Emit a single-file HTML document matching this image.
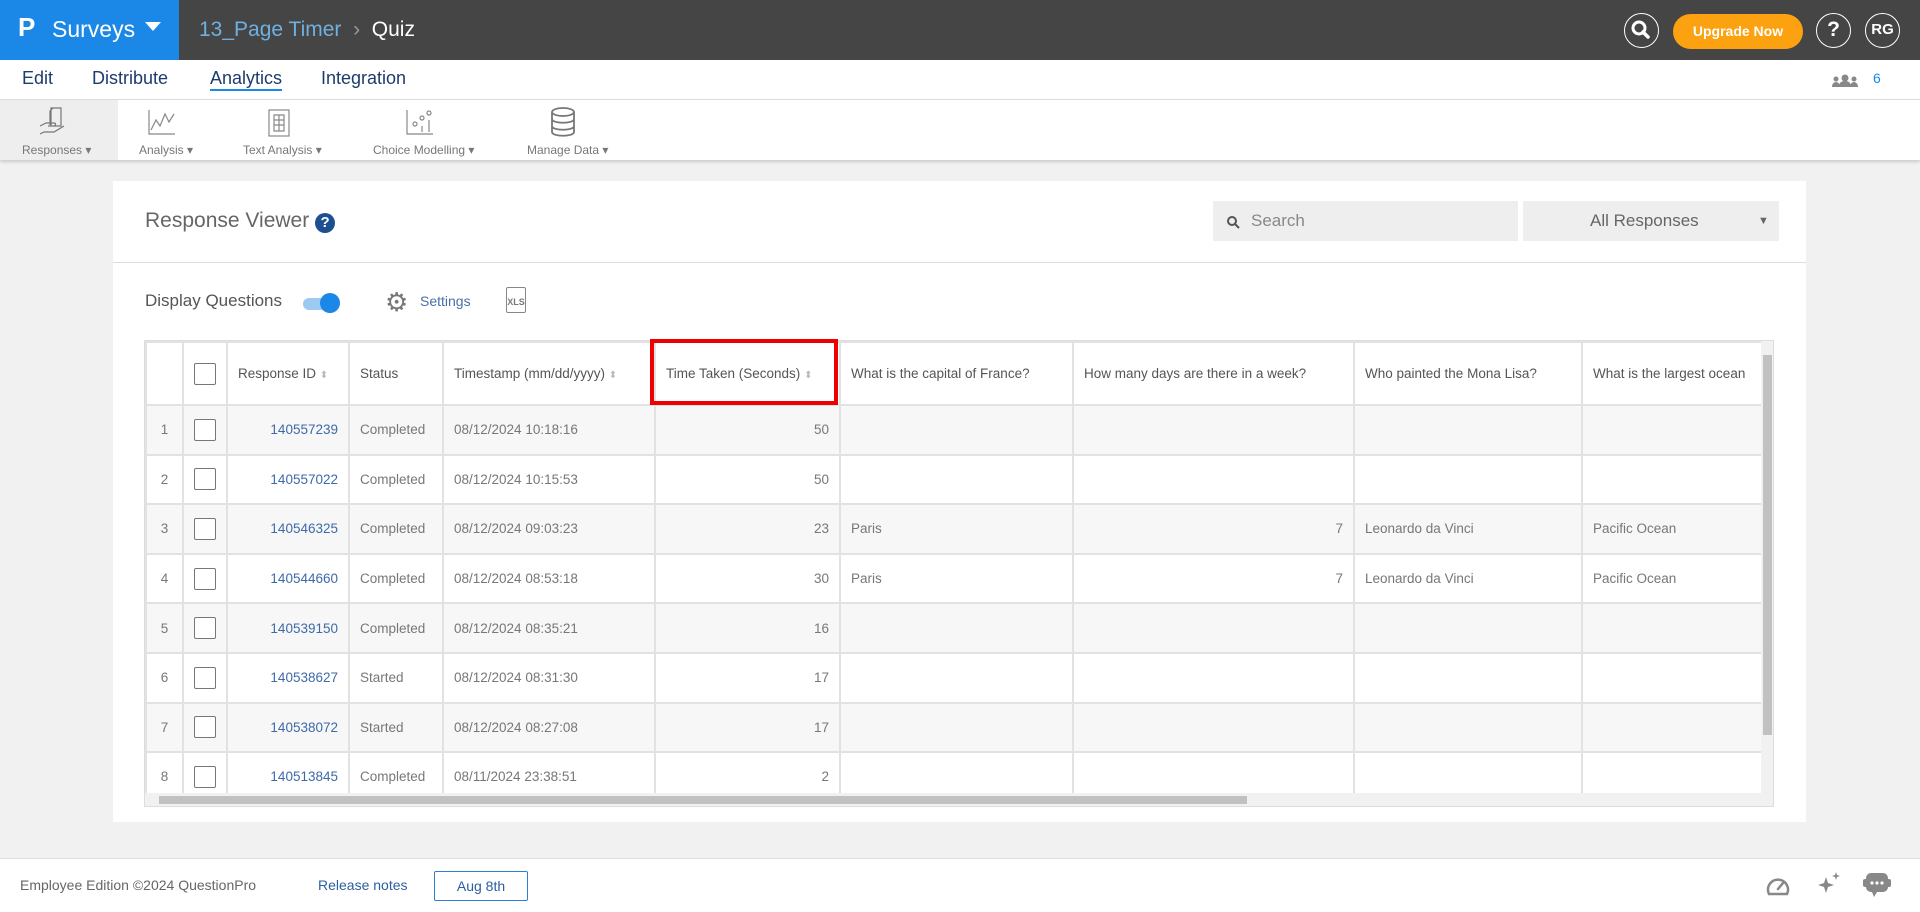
<!DOCTYPE html>
<html><head><meta charset="utf-8"><style>
*{box-sizing:border-box;margin:0;padding:0}
body{width:1920px;height:912px;overflow:hidden;background:#f1f1f1;font-family:"Liberation Sans",sans-serif;position:relative;color:#555}
.a{position:absolute}
.top{left:0;top:0;width:1920px;height:60px;background:#454545}
.brand{left:0;top:0;width:179px;height:60px;background:#1b87e6;color:#fff;font-size:23px}
.nav{left:0;top:60px;width:1920px;height:40px;background:#fff;border-bottom:1px solid #ddd}
.nav span{position:absolute;top:8px;font-size:18px;color:#1d3c6e}
.tool{left:0;top:100px;width:1920px;height:60px;background:#fff;box-shadow:0 2px 3px rgba(0,0,0,.15)}
.tl{position:absolute;top:43px;font-size:12px;color:#777}
.card{left:113px;top:181px;width:1693px;height:641px;background:#fff}
table{border-collapse:collapse;table-layout:fixed;font-size:13.5px}
td{border:2px solid #e2e2e2;height:49.6px;padding:0 10px;white-space:nowrap;overflow:hidden;color:#777}
tr.o td{background:#f7f7f7}
th{border:2px solid #e2e2e2;height:63px;font-weight:normal;text-align:left;padding:0 10px;color:#555;font-size:13.5px;white-space:nowrap;overflow:hidden}
.r{text-align:right}.c{text-align:center}
.cb{display:inline-block;width:22px;height:22px;border:1px solid #777;border-radius:2px;background:#fff;vertical-align:middle}
.id{color:#3d6aa8;text-align:right}
.s{color:#bbb;font-size:10px}
.foot{left:0;top:858px;width:1920px;height:54px;background:#fff;border-top:1px solid #ddd}
</style></head><body>
<div class="a top"></div>
<div class="a brand"><span class="a" style="left:18px;top:12px;font-weight:bold;font-size:26px">P</span><span class="a" style="left:52px;top:16px">Surveys</span><span class="a" style="left:145px;top:22px;width:0;height:0;border-left:8px solid transparent;border-right:8px solid transparent;border-top:9px solid #fff"></span></div>
<div class="a" style="left:199px;top:18px;font-size:21px;color:#6fb0e0">13_Page Timer <span style="color:#999">&nbsp;›&nbsp;</span> <span style="color:#fff">Quiz</span></div>
<div class="a" style="left:1624px;top:13px;width:35px;height:35px;border:1.5px solid #fff;border-radius:50%"><svg width="32" height="32" viewBox="0 0 32 32"><circle cx="14" cy="14" r="6" stroke="#fff" stroke-width="3" fill="none"/><path d="M18 18l5 5" stroke="#fff" stroke-width="3.5" stroke-linecap="round"/></svg></div>
<div class="a" style="left:1673px;top:14px;width:130px;height:35px;background:#fca10f;border-radius:18px;color:#fff;font-weight:bold;font-size:14px;text-align:center;line-height:35px">Upgrade Now</div>
<div class="a" style="left:1816px;top:13px;width:35px;height:35px;border:1.5px solid #fff;border-radius:50%;color:#fff;font-weight:bold;font-size:21px;text-align:center;line-height:32px">?</div>
<div class="a" style="left:1865px;top:13px;width:35px;height:35px;border:1.5px solid #fff;border-radius:50%;color:#fff;font-weight:bold;font-size:15px;text-align:center;line-height:32px">RG</div>
<div class="a nav"><span style="left:22px">Edit</span><span style="left:92px">Distribute</span><span style="left:210px;border-bottom:2px solid #1b87e6">Analytics</span><span style="left:321px">Integration</span>
<svg class="a" style="left:1832px;top:14px" width="26" height="14" fill="#888"><circle cx="4" cy="5" r="2.5"/><circle cx="13" cy="4" r="3.5"/><circle cx="22" cy="5" r="2.5"/><path d="M0 13c0-4 3-5 4-5s4 1 4 5zM7 13c0-5 3-6 6-6s6 1 6 6zM18 13c0-4 3-5 4-5s4 1 4 5z"/></svg>
<span style="left:1873px;top:10px;font-size:14px;color:#1b87e6">6</span></div>
<div class="a tool"><div class="a" style="left:0;top:0;width:118px;height:60px;background:#eee"></div>
<svg class="a" style="left:38px;top:6px" width="30" height="32" viewBox="0 0 30 32" fill="none" stroke="#777" stroke-width="1.2"><path d="M13 2h10v18h-10zM15 2l-3 3v14M2 20l6-3h8c2 0 2 3 0 3h-6M2 28l4-2h10l10-6"/></svg>
<svg class="a" style="left:147px;top:8px" width="30" height="28" fill="none" stroke="#888" stroke-width="1.2"><path d="M2 2v24h26M4 22l5-10 4 6 5-12 4 8 5-8"/></svg>
<svg class="a" style="left:267px;top:8px" width="24" height="30" fill="none" stroke="#888" stroke-width="1.2"><rect x="2" y="2" width="20" height="26"/><path d="M7 7h10v16h-10zM7 12h10M7 17h10M12 7v16"/></svg>
<svg class="a" style="left:405px;top:8px" width="30" height="28" fill="none" stroke="#888" stroke-width="1.2"><path d="M2 2v24h26"/><circle cx="10" cy="16" r="2"/><circle cx="17" cy="10" r="2"/><circle cx="24" cy="5" r="2"/><path d="M17 18v6M24 12v12"/></svg>
<svg class="a" style="left:549px;top:6px" width="28" height="32" fill="none" stroke="#777" stroke-width="1.8"><ellipse cx="14" cy="6" rx="11" ry="4"/><path d="M3 6v20c0 5 22 5 22 0V6M3 13c0 5 22 5 22 0M3 20c0 5 22 5 22 0"/></svg>
<span class="tl" style="left:22px">Responses ▾</span><span class="tl" style="left:139px">Analysis ▾</span><span class="tl" style="left:243px">Text Analysis ▾</span><span class="tl" style="left:373px">Choice Modelling ▾</span><span class="tl" style="left:527px">Manage Data ▾</span></div>
<div class="a card">
<div class="a" style="left:32px;top:28px;font-size:21px;color:#666">Response Viewer <span style="display:inline-block;width:20px;height:20px;border-radius:50%;background:#1d4f91;color:#fff;font-size:15px;font-weight:bold;text-align:center;line-height:20px">?</span></div>
<div class="a" style="left:1100px;top:20px;width:305px;height:40px;background:#eee;color:#888;font-size:17px;line-height:40px;padding-left:38px">Search<svg class="a" style="left:13px;top:14px" width="14" height="14"><circle cx="6" cy="6" r="4" stroke="#555" stroke-width="2" fill="none"/><path d="M9 9l4 4" stroke="#555" stroke-width="2"/></svg></div>
<div class="a" style="left:1410px;top:20px;width:256px;height:40px;background:#eee;color:#666;font-size:17px;line-height:40px;padding-left:67px">All Responses<span class="a" style="left:235px;top:0;font-size:11px">▼</span></div>
<div class="a" style="left:0;top:81px;width:1693px;height:1px;background:#ddd"></div>
<div class="a" style="left:32px;top:110px;font-size:17px;color:#555">Display Questions</div>
<div class="a" style="left:190px;top:117px;width:32px;height:12px;border-radius:6px;background:#9ccaf2"></div>
<div class="a" style="left:207px;top:112px;width:20px;height:20px;border-radius:50%;background:#1b87e6"></div>
<div class="a" style="left:272px;top:106px;font-size:26px;color:#777">⚙</div>
<div class="a" style="left:307px;top:112px;font-size:14px;color:#4a6fa5">Settings</div>
<div class="a" style="left:393px;top:106px;width:20px;height:26px;border:1.5px solid #888;border-radius:2px;font-size:9px;font-weight:bold;color:#777;padding-top:9px;text-align:center">XLS</div>
</div>
<div class="a" style="left:144px;top:340px;width:1630px;height:467px;overflow:hidden;background:#fff;border:1px solid #ddd">
<table style="width:1617px">
<colgroup><col style="width:37px"><col style="width:44px"><col style="width:122px"><col style="width:94px"><col style="width:212px"><col style="width:185px"><col style="width:233px"><col style="width:281px"><col style="width:228px"><col style="width:181px"></colgroup>
<tr><th></th><th class="c"><span class="cb"></span></th><th>Response ID <span class="s">⬍</span></th><th>Status</th><th>Timestamp (mm/dd/yyyy) <span class="s">⬍</span></th><th>Time Taken (Seconds) <span class="s">⬍</span></th><th>What is the capital of France?</th><th>How many days are there in a week?</th><th>Who painted the Mona Lisa?</th><th>What is the largest ocean</th></tr>
<tr class="o"><td class="c">1</td><td class="c"><span class="cb"></span></td><td class="id">140557239</td><td>Completed</td><td>08/12/2024 10:18:16</td><td class="r">50</td><td></td><td></td><td></td><td></td></tr>
<tr><td class="c">2</td><td class="c"><span class="cb"></span></td><td class="id">140557022</td><td>Completed</td><td>08/12/2024 10:15:53</td><td class="r">50</td><td></td><td></td><td></td><td></td></tr>
<tr class="o"><td class="c">3</td><td class="c"><span class="cb"></span></td><td class="id">140546325</td><td>Completed</td><td>08/12/2024 09:03:23</td><td class="r">23</td><td>Paris</td><td class="r">7</td><td>Leonardo da Vinci</td><td>Pacific Ocean</td></tr>
<tr><td class="c">4</td><td class="c"><span class="cb"></span></td><td class="id">140544660</td><td>Completed</td><td>08/12/2024 08:53:18</td><td class="r">30</td><td>Paris</td><td class="r">7</td><td>Leonardo da Vinci</td><td>Pacific Ocean</td></tr>
<tr class="o"><td class="c">5</td><td class="c"><span class="cb"></span></td><td class="id">140539150</td><td>Completed</td><td>08/12/2024 08:35:21</td><td class="r">16</td><td></td><td></td><td></td><td></td></tr>
<tr><td class="c">6</td><td class="c"><span class="cb"></span></td><td class="id">140538627</td><td>Started</td><td>08/12/2024 08:31:30</td><td class="r">17</td><td></td><td></td><td></td><td></td></tr>
<tr class="o"><td class="c">7</td><td class="c"><span class="cb"></span></td><td class="id">140538072</td><td>Started</td><td>08/12/2024 08:27:08</td><td class="r">17</td><td></td><td></td><td></td><td></td></tr>
<tr><td class="c">8</td><td class="c"><span class="cb"></span></td><td class="id">140513845</td><td>Completed</td><td>08/11/2024 23:38:51</td><td class="r">2</td><td></td><td></td><td></td><td></td></tr>
</table>
<div class="a" style="left:1616px;top:0;width:13px;height:452px;background:#f1f1f1"><div class="a" style="left:2px;top:14px;width:9px;height:380px;background:#c1c1c1"></div></div>
<div class="a" style="left:0;top:452px;width:1630px;height:14px;background:#f1f1f1"><div class="a" style="left:14px;top:3px;width:1088px;height:8px;background:#c1c1c1"></div></div>
</div>
<div class="a" style="left:650px;top:339px;width:188px;height:66px;border:4px solid #e00"></div>
<div class="a foot">
<span class="a" style="left:20px;top:18px;font-size:14px;color:#666">Employee Edition ©2024 QuestionPro</span>
<span class="a" style="left:318px;top:18px;font-size:14px;color:#2b5fa0">Release notes</span>
<span class="a" style="left:434px;top:12px;width:94px;height:30px;border:1px solid #2b7fd0;border-radius:2px;color:#2b5fa0;font-size:14px;text-align:center;line-height:28px">Aug 8th</span>
<svg class="a" style="left:1766px;top:16px" width="24" height="22" fill="none" stroke="#888" stroke-width="2.5"><path d="M3 19a10 10 0 1 1 18 0z"/><path d="M12 14l5-6" stroke-linecap="round"/></svg>
<svg class="a" style="left:1816px;top:12px" width="26" height="26" fill="#888"><path d="M10 6l2 6 6 2-6 2-2 6-2-6-6-2 6-2z"/><path d="M20 1l1 3 3 1-3 1-1 3-1-3-3-1 3-1z"/></svg>
<svg class="a" style="left:1862px;top:13px" width="30" height="26" fill="#888"><rect x="4" y="1" width="22" height="19" rx="5"/><rect x="1" y="7" width="4" height="8" rx="2"/><rect x="25" y="7" width="4" height="8" rx="2"/><path d="M10 20l2 5 3-5z"/><circle cx="10" cy="11" r="1.6" fill="#fff"/><circle cx="15" cy="11" r="1.6" fill="#fff"/><circle cx="20" cy="11" r="1.6" fill="#fff"/></svg>
</div>
</body></html>
